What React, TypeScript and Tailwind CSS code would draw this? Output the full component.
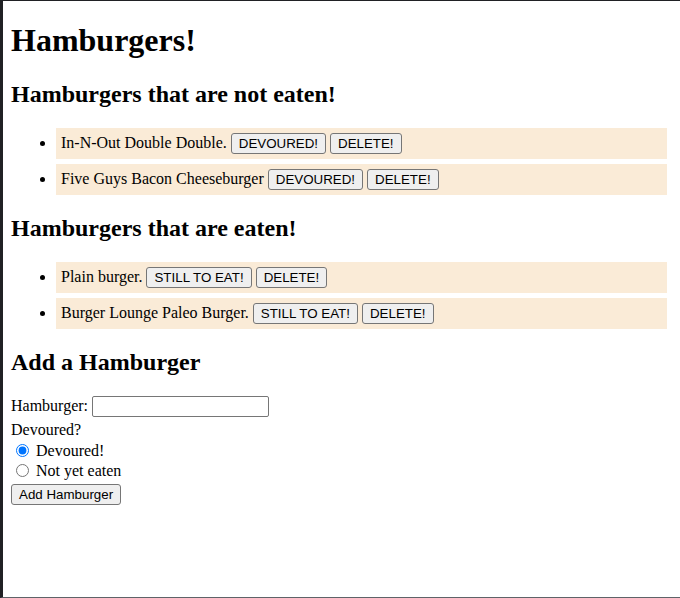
const notEaten = ["In-N-Out Double Double.", "Five Guys Bacon Cheeseburger"]
const eaten = ["Plain burger.", "Burger Lounge Paleo Burger."]

const btnClass =
  "inline-block h-[21px] box-border bg-[#efefef] border border-solid border-[#767676] rounded-[3px] px-[7px] py-0 text-[13.33px] leading-[19px] text-black font-['Liberation_Sans',Arial,sans-serif] align-baseline"

function Btn({ children }: { children: string }) {
  return (
    <button type="button" className={btnClass}>
      {children}
    </button>
  )
}

function BurgerList({ items, action }: { items: string[]; action: string }) {
  return (
    <ul className="list-disc pl-10 my-4">
      {items.map((name) => (
        <li key={name} className="m-[5px] p-[5px] bg-[#faebd7] leading-[18px]">
          {name} <Btn>{action}</Btn> <Btn>DELETE!</Btn>
        </li>
      ))}
    </ul>
  )
}

export default function App() {
  return (
    <div className="w-[680px] h-[598px] box-border border-t border-l-[3px] border-b border-solid border-t-[#202124] border-l-[#202124] border-b-[#5f6368] bg-white text-black px-2 overflow-hidden font-['Liberation_Serif','Times_New_Roman',serif] text-[16px] leading-[normal]">
      <h1 className="text-[32px] font-bold mt-[21.44px] mb-[21.44px]">Hamburgers!</h1>

      <h2 className="text-[24px] font-bold my-[19.92px]">Hamburgers that are not eaten!</h2>
      <BurgerList items={notEaten} action="DEVOURED!" />

      <h2 className="text-[24px] font-bold my-[19.92px]">Hamburgers that are eaten!</h2>
      <BurgerList items={eaten} action="STILL TO EAT!" />

      <h2 className="text-[24px] font-bold mt-[19.92px] mb-[19px]">Add a Hamburger</h2>
      <form onSubmit={(e) => e.preventDefault()}>
        <div className="h-[26px] leading-[21px]">
          <label htmlFor="burger">Hamburger:</label>{" "}
          <input
            id="burger"
            type="text"
            className="w-[177px] h-[21px] box-border border border-solid border-[#767676] rounded-[2px] px-[2px] py-[1px] text-[13.33px] font-['Liberation_Sans',Arial,sans-serif] bg-white align-baseline"
          />
        </div>
        <div className="h-[20px]">Devoured?</div>
        <div className="h-[20px] flex items-center">
          <input type="radio" name="devoured" id="yes" defaultChecked className="w-[13px] h-[13px] ml-[5px] mr-[7px] my-0" />
          <label htmlFor="yes">Devoured!</label>
        </div>
        <div className="h-[20px] flex items-center">
          <input type="radio" name="devoured" id="no" className="w-[13px] h-[13px] ml-[5px] mr-[7px] my-0" />
          <label htmlFor="no">Not yet eaten</label>
        </div>
        <div className="mt-[3px]">
          <button type="submit" className={btnClass}>
            Add Hamburger
          </button>
        </div>
      </form>
    </div>
  )
}
